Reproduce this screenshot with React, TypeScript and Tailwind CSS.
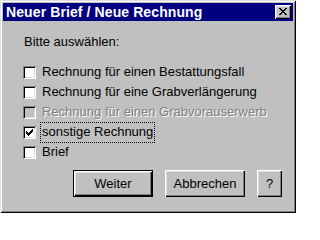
import React from "react";

const font = { fontFamily: '"Liberation Sans", Arial, sans-serif' };

interface OptionProps {
  label: string;
  checked?: boolean;
  disabled?: boolean;
  focused?: boolean;
}

function CheckMark() {
  // 7x7 pixel check, Win95 style
  const rows = ["......#", ".....##", "#...###", "##.###.", "#####..", ".###...", "..#...."];
  return (
    <svg width="7" height="7" viewBox="0 0 7 7" shapeRendering="crispEdges">
      {rows.flatMap((r, y) =>
        r.split("").map((c, x) => (c === "#" ? <rect key={`${x}-${y}`} x={x} y={y} width="1" height="1" fill="#000" /> : null))
      )}
    </svg>
  );
}

function Option({ label, checked = false, disabled = false, focused = false }: OptionProps) {
  return (
    <div className="flex items-center h-[20px]">
      <div
        className={`w-[13px] h-[13px] shrink-0 flex items-center justify-center shadow-[inset_1px_1px_#808080,inset_-1px_-1px_#fff,inset_2px_2px_#000,inset_-2px_-2px_#dfdfdf] ${
          disabled ? "bg-[#c0c0c0]" : "bg-white"
        }`}
      >
        {checked && <CheckMark />}
      </div>
      <div
        className={`ml-[4px] h-[21px] flex items-center px-[1px] border border-dotted ${
          focused ? "border-black" : "border-transparent"
        } ${disabled ? "text-[#808080] [text-shadow:1px_1px_0_#fff]" : "text-black"}`}
      >
        {label}
      </div>
    </div>
  );
}

function Win95Button({ children, isDefault = false, width }: { children: React.ReactNode; isDefault?: boolean; width: string }) {
  return (
    <div
      className={`${width} h-[27px] flex items-center justify-center bg-[#c0c0c0] text-black ${
        isDefault
          ? "border border-black shadow-[inset_1px_1px_#fff,inset_-1px_-1px_#000,inset_-2px_-2px_#808080,inset_2px_2px_#dfdfdf]"
          : "shadow-[inset_1px_1px_#fff,inset_-1px_-1px_#000,inset_-2px_-2px_#808080,inset_2px_2px_#dfdfdf]"
      }`}
    >
      {children}
    </div>
  );
}

export default function App() {
  return (
    <div
      style={font}
      className="w-[296px] h-[213px] bg-[#c0c0c0] p-[3px] flex flex-col text-[13px] leading-[16px] shadow-[inset_1px_1px_#dfdfdf,inset_-1px_-1px_#000,inset_2px_2px_#fff,inset_-2px_-2px_#808080]"
    >
      {/* Titelleiste */}
      <div className="h-[18px] bg-[#000080] flex items-center justify-between pl-[3px] pr-[2px]">
        <span className="text-white font-bold text-[14px] leading-[16px] tracking-[0.1px]">Neuer Brief / Neue Rechnung</span>
        <div className="w-[16px] h-[14px] bg-[#c0c0c0] flex items-center justify-center shadow-[inset_1px_1px_#fff,inset_-1px_-1px_#000,inset_-2px_-2px_#808080,inset_2px_2px_#dfdfdf]">
          <svg width="8" height="7" viewBox="0 0 8 7" shapeRendering="crispEdges" className="mb-[1px]">
            <path d="M0 0h2v1h-2zM6 0h2v1h-2zM1 1h2v1h-2zM5 1h2v1h-2zM2 2h4v1h-4zM3 3h2v1h-2zM2 4h4v1h-4zM1 5h2v1h-2zM5 5h2v1h-2zM0 6h2v1h-2zM6 6h2v1h-2z" fill="#000" />
          </svg>
        </div>
      </div>

      {/* Inhalt */}
      <div className="flex flex-col pl-[20px] pt-[13px]">
        <div className="ml-[1px] h-[16px] text-black">Bitte auswählen:</div>
        <div className="mt-[12px] flex flex-col">
          <Option label="Rechnung für einen Bestattungsfall" />
          <Option label="Rechnung für eine Grabverlängerung" />
          <Option label="Rechnung für einen Grabvorauserwerb" disabled />
          <Option label="sonstige Rechnung" checked focused />
          <Option label="Brief" />
        </div>
      </div>

      <div className="mt-[8px] flex justify-end gap-[12px] pr-[11px]">
        <Win95Button isDefault width="w-[80px]">Weiter</Win95Button>
        <Win95Button width="w-[80px]">Abbrechen</Win95Button>
        <Win95Button width="w-[25px]">?</Win95Button>
      </div>
    </div>
  );
}
